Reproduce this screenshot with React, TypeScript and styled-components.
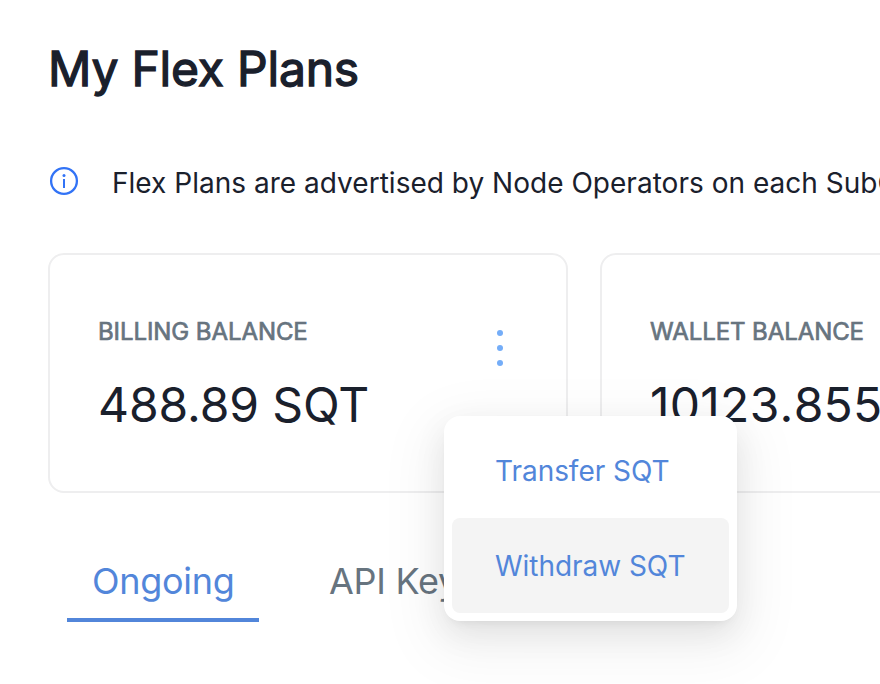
import React from "react";
import styled, { createGlobalStyle } from "styled-components";

const GlobalStyle = createGlobalStyle`
  * { box-sizing: border-box; }
  html, body { margin: 0; padding: 0; background: #fff; overflow: hidden; }
  body { font-family: Inter, sans-serif; color: #1a202c; }
`;

const Page = styled.main`
  width: 880px;
  height: 684px;
  padding: 39px 0 0 48px;
  overflow: hidden;
  background: #fff;
`;

const Title = styled.h1`
  margin: 0;
  font-size: 48px;
  line-height: 60px;
  font-weight: 400;
  letter-spacing: -0.2px;
  white-space: nowrap;
  -webkit-text-stroke: 1.3px currentColor;
`;

const Notice = styled.div`
  display: flex;
  align-items: center;
  gap: 32px;
  height: 44px;
  margin-top: 62px;
  font-size: 28px;
  letter-spacing: 0.02px;
  white-space: nowrap;
  svg { flex: none; margin-top: -4px; }
`;

const Cards = styled.section`
  display: flex;
  gap: 32px;
  margin-top: 48px;
`;

const Card = styled.article`
  flex: none;
  display: flex;
  justify-content: space-between;
  width: 520px;
  height: 240px;
  padding: 59px 48px 0;
  border: 2px solid #eeeeef;
  border-radius: 16px;
`;

const Label = styled.div`
  font-size: 24px;
  line-height: 36px;
  font-weight: 400;
  letter-spacing: -0.08px;
  color: #67747f;
  white-space: nowrap;
  -webkit-text-stroke: 0.7px currentColor;
`;

const Amount = styled.div<{ $spacing: number; $unkerned?: boolean }>`
  margin-top: 25px;
  font-size: 48px;
  line-height: 60px;
  font-kerning: ${p => (p.$unkerned ? "none" : "auto")};
  letter-spacing: ${p => p.$spacing}px;
  white-space: nowrap;
`;

const MenuAnchor = styled.div`
  position: relative;
  width: 40px;
  height: 40px;
  margin: 15px -2px 0 0;
`;

const Menu = styled.div`
  position: absolute;
  z-index: 2;
  top: 87px;
  right: -217px;
  width: 293px;
  height: 205px;
  padding: 8px;
  border-radius: 16px;
  background: #fff;
  box-shadow: 0 12px 32px rgba(0,0,0,.08), 0 6px 12px -8px rgba(0,0,0,.12), 0 18px 56px 16px rgba(0,0,0,.05);
`;

const MenuItem = styled.div<{ $active?: boolean }>`
  display: flex;
  align-items: center;
  height: ${p => (p.$active ? 95 : 94)}px;
  padding-left: 43px;
  border-radius: 8px;
  background: ${p => (p.$active ? "#f4f4f4" : "transparent")};
  color: #5286da;
  font-size: 28px;
  letter-spacing: -0.04px;
  white-space: nowrap;
`;

const Tabs = styled.nav`
  display: flex;
  gap: 45px;
  margin: 53px 0 0 19px;
`;

const Tab = styled.div<{ $active?: boolean }>`
  width: 192px;
  height: 76px;
  padding-left: 25px;
  border-bottom: 4px solid ${p => (p.$active ? "#5286da" : "transparent")};
  color: ${p => (p.$active ? "#5286da" : "#67747f")};
  font-size: 36px;
  line-height: 70px;
  letter-spacing: -0.28px;
  white-space: nowrap;
`;

const InfoIcon = () => (
  <svg width="32" height="32" viewBox="0 0 32 32" fill="none">
    <circle cx="16" cy="16" r="12.9" stroke="#3273f6" strokeWidth="2.3" />
    <circle cx="16" cy="10.6" r="1.5" fill="#3273f6" />
    <path d="M16 14v9" stroke="#3273f6" strokeWidth="2" />
  </svg>
);

const Dots = () => (
  <svg width="40" height="40" viewBox="0 0 40 40" fill="#74adf8">
    <circle cx="20" cy="4" r="3" />
    <circle cx="20" cy="19" r="3" />
    <circle cx="20" cy="34" r="3" />
  </svg>
);

export default function App() {
  return (
    <>
      <GlobalStyle />
      <Page>
        <Title>My Flex Plans</Title>
        <Notice>
          <InfoIcon />
          <span>Flex Plans are advertised by Node Operators on each SubQuery</span>
        </Notice>
        <Cards>
          <Card>
            <div>
              <Label>BILLING BALANCE</Label>
              <Amount $spacing={-0.1}>488.89 SQT</Amount>
            </div>
            <MenuAnchor>
              <Dots />
              <Menu>
                <MenuItem>Transfer SQT</MenuItem>
                <MenuItem $active>Withdraw SQT</MenuItem>
              </Menu>
            </MenuAnchor>
          </Card>
          <Card>
            <div>
              <Label>WALLET BALANCE</Label>
              <Amount $spacing={0.26} $unkerned>10123.855</Amount>
            </div>
          </Card>
        </Cards>
        <Tabs>
          <Tab $active>Ongoing</Tab>
          <Tab>API Keys</Tab>
        </Tabs>
      </Page>
    </>
  );
}
